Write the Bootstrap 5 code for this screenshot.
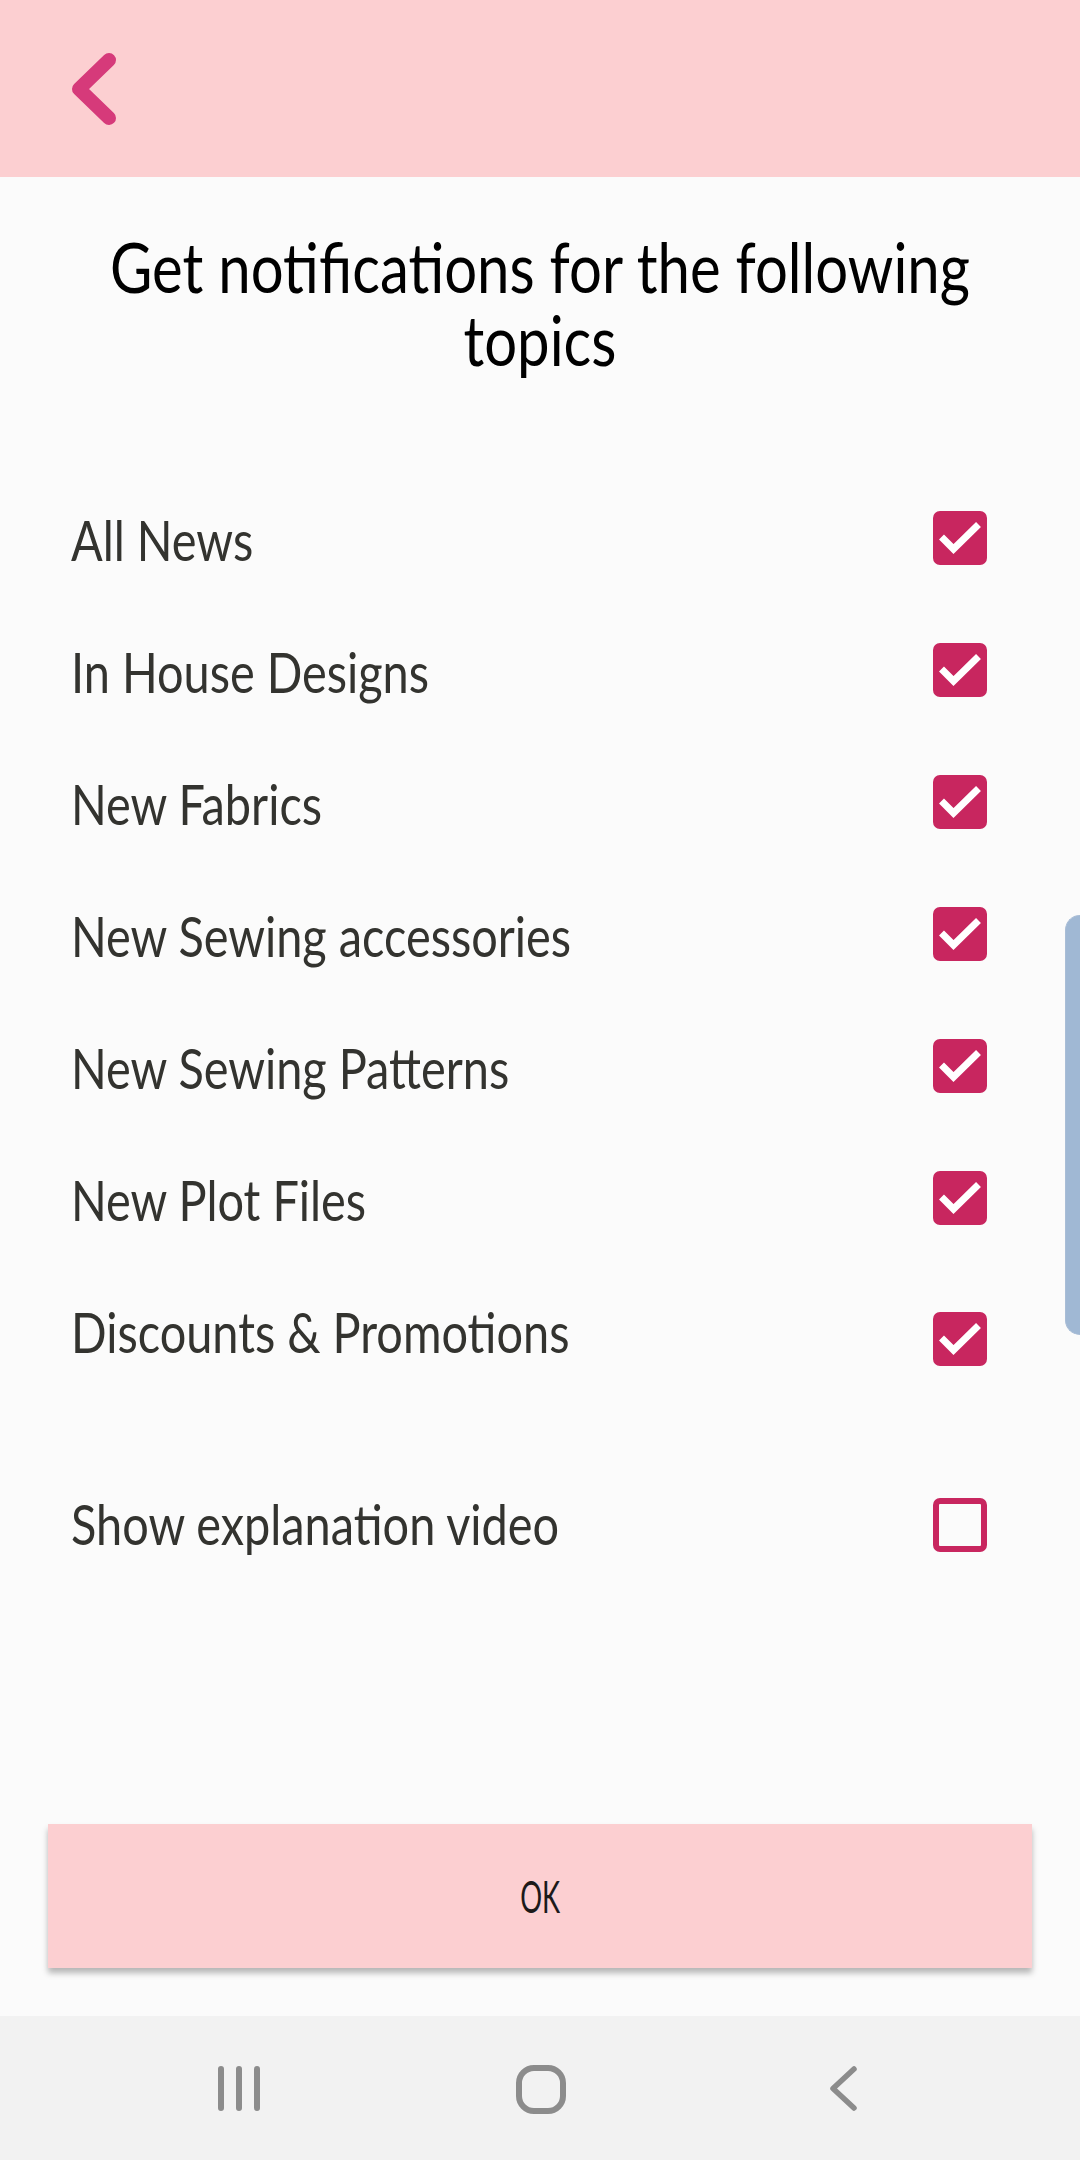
<!DOCTYPE html>
<html lang="en">
<head>
  <meta charset="UTF-8">
  <meta name="viewport" content="width=device-width, initial-scale=1">
  <title>Notifications</title>
  <link href="https://cdn.jsdelivr.net/npm/bootstrap@5.3.0/dist/css/bootstrap.min.css" rel="stylesheet">
  <style>
    body { background-color: #fbfbfb; color: #33332f; font-family: Lato, "Liberation Sans", sans-serif; }
    .top-bar { height: 177px; background-color: #fccfd1; padding: 0 0 0 64px; }
    .page-title { font-family: inherit; font-size: 69px; line-height: 73px; font-weight: 400; color: #000; text-align: center; white-space: nowrap; margin: 53px 0 0; transform: scaleX(.842); }
    .topic-list { margin-top: 96px; padding: 0 93px 0 71px; }
    .topic-row { height: 132px; margin: 0; padding: 0; }
    .topic-row label { font-size: 57px; line-height: 66px; margin-top: 2px; white-space: nowrap; transform: scaleX(.822); transform-origin: left center; }
    .topic-gap { margin-top: 60px; }
    .topic-check.form-check-input {
      float: none; width: 54px; height: 54px; margin: 0; border: 6px solid #c8265f; border-radius: 7px;
      background-color: transparent; background-origin: border-box; box-shadow: none;
    }
    .topic-check.form-check-input:checked[type=checkbox] {
      --bs-form-check-bg-image: url("data:image/svg+xml,%3Csvg xmlns='http://www.w3.org/2000/svg' viewBox='0 0 54 54'%3E%3Cpolyline points='8.5,26 20.5,38 45.5,13.5' fill='none' stroke='%23fff' stroke-width='7'/%3E%3C/svg%3E");
      background-color: #c8265f; border-color: #c8265f;
    }
    .check-low { margin-top: 18px !important; }
    .check-low-sm { margin-top: 6px !important; }
    .ok-btn { height: 144px; margin: auto 48px 48px; background-color: #fccfd1; border: 0; border-radius: 0; color: #1c1a1a; font-size: 44px; box-shadow: 0 5px 6px rgba(0, 0, 0, .28); }
    .ok-btn span { display: inline-block; transform: scaleX(.62); }
    .ok-btn:hover, .ok-btn:active { background-color: #fccfd1 !important; }
    .sys-nav { height: 144px; background-color: #f2f2f2; padding: 0 187px 0 189px; }
    .sys-nav svg { display: block; }
    .edge-handle { position: fixed; right: 0; top: 915px; width: 15px; height: 420px; background-color: #a0b8d4; border: 1px solid #a9bdd6; border-right: 0; border-radius: 16px 0 0 16px; }
  </style>
</head>
<body class="d-flex flex-column min-vh-100">

<header class="top-bar d-flex align-items-center">
  <a href="#" aria-label="Back" class="d-block">
    <svg width="60" height="84" viewBox="64 45 60 84"><path d="M109 58L79 87L109 116" fill="none" stroke="#d63a7a" stroke-width="14" stroke-linecap="round" stroke-linejoin="round"/></svg>
  </a>
</header>

<h1 class="page-title">Get notifications for the following<br>topics</h1>

<div class="topic-list">
  <div class="topic-row form-check d-flex justify-content-between align-items-center">
    <label for="t1">All News</label>
    <input class="form-check-input topic-check" type="checkbox" id="t1" checked>
  </div>
  <div class="topic-row form-check d-flex justify-content-between align-items-center">
    <label for="t2">In House Designs</label>
    <input class="form-check-input topic-check" type="checkbox" id="t2" checked>
  </div>
  <div class="topic-row form-check d-flex justify-content-between align-items-center">
    <label for="t3">New Fabrics</label>
    <input class="form-check-input topic-check" type="checkbox" id="t3" checked>
  </div>
  <div class="topic-row form-check d-flex justify-content-between align-items-center">
    <label for="t4">New Sewing accessories</label>
    <input class="form-check-input topic-check" type="checkbox" id="t4" checked>
  </div>
  <div class="topic-row form-check d-flex justify-content-between align-items-center">
    <label for="t5">New Sewing Patterns</label>
    <input class="form-check-input topic-check" type="checkbox" id="t5" checked>
  </div>
  <div class="topic-row form-check d-flex justify-content-between align-items-center">
    <label for="t6">New Plot Files</label>
    <input class="form-check-input topic-check" type="checkbox" id="t6" checked>
  </div>
  <div class="topic-row form-check d-flex justify-content-between align-items-center">
    <label for="t7">Discounts &amp; Promotions</label>
    <input class="form-check-input topic-check check-low" type="checkbox" id="t7" checked>
  </div>
  <div class="topic-row topic-gap form-check d-flex justify-content-between align-items-center">
    <label for="t8">Show explanation video</label>
    <input class="form-check-input topic-check check-low-sm" type="checkbox" id="t8">
  </div>
</div>

<button type="button" class="btn ok-btn"><span>OK</span></button>

<nav class="sys-nav d-flex justify-content-between align-items-center">
  <a href="#" aria-label="Recent apps" class="d-flex justify-content-center">
    <svg width="100" height="60" viewBox="189 2058 100 60"><path d="M221 2069V2108M239 2069V2108M257 2069V2108" fill="none" stroke="#8c8c8c" stroke-width="6" stroke-linecap="round"/></svg>
  </a>
  <a href="#" aria-label="Home" class="d-flex justify-content-center">
    <svg width="100" height="60" viewBox="491 2058 100 60"><rect x="519" y="2068" width="44" height="43" rx="15" fill="none" stroke="#8c8c8c" stroke-width="6"/></svg>
  </a>
  <a href="#" aria-label="Back" class="d-flex justify-content-center">
    <svg width="100" height="60" viewBox="793 2058 100 60"><path d="M854 2069L833 2088.5L854 2108" fill="none" stroke="#8c8c8c" stroke-width="5.5" stroke-linecap="round" stroke-linejoin="round"/></svg>
  </a>
</nav>

<div class="edge-handle"></div>

<script src="https://cdn.jsdelivr.net/npm/bootstrap@5.3.0/dist/js/bootstrap.bundle.min.js"></script>
</body>
</html>
